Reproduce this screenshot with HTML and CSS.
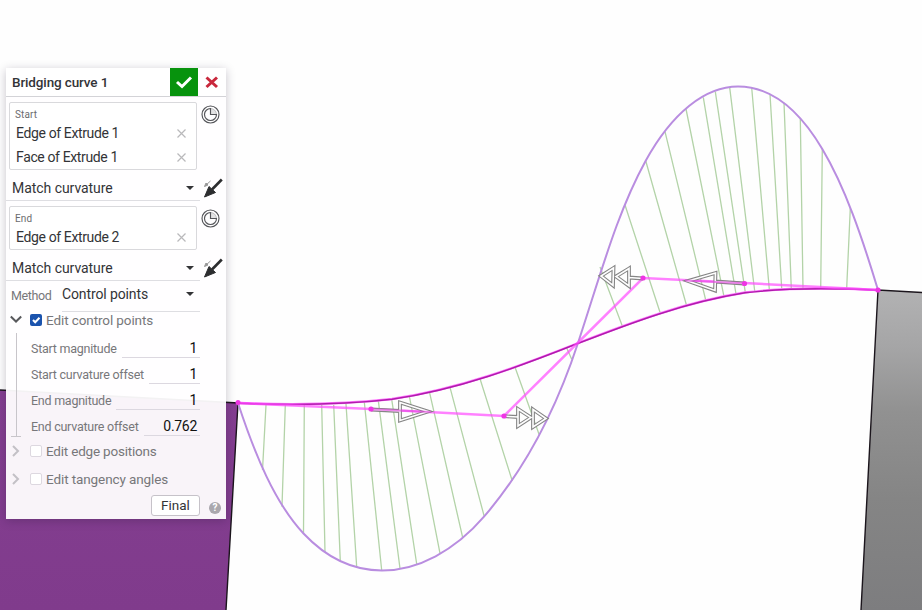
FILE: index.html
```
<!DOCTYPE html>
<html lang="en">
<head>
<meta charset="utf-8">
<title>Bridging curve</title>
<link rel="stylesheet" href="styles.css">
</head>
<body>
<svg class="scene" viewBox="0 0 922 610" width="922" height="610">
  <defs>
    <linearGradient id="side" x1="0" y1="290" x2="0" y2="610" gradientUnits="userSpaceOnUse">
      <stop offset="0" stop-color="#b2b2b3"/><stop offset=".18" stop-color="#a5a5a6"/><stop offset=".38" stop-color="#919191"/><stop offset=".65" stop-color="#858585"/><stop offset="1" stop-color="#7d7d7f"/>
    </linearGradient>
    <linearGradient id="block" x1="0" y1="390" x2="0" y2="610" gradientUnits="userSpaceOnUse">
      <stop offset="0" stop-color="#843f91"/><stop offset="1" stop-color="#803b8c"/>
    </linearGradient>
  </defs>
  <path d="M0 390L238 403L226 610H0Z" fill="url(#block)"/>
  <path d="M0 390L238 403L226 610" class="edge"/>
  <path d="M878 290L922 292.500V610H861Z" fill="url(#side)"/>
  <path d="M922 292.500L878 290L861 610" class="edge"/>
  <path class="comb" d="M266 405L262.500 470M285.300 405L282 506.700M304.300 405L303.500 533.500M321.700 405L325 552M333.700 405L340.300 561M346 404L356.700 567M364.300 402L381.700 570.300M378.300 400.700L400 568.500M391.700 399.300L416.700 564M409.300 396L440 553.300M429.300 391.300L462.700 537.700M450 387.300L484.300 516.700M480 378.700L512.300 481M515.300 368L539.300 435M566.700 348L571.700 359.300M622.300 326L600 267M625 205L660 312.300M645.700 160.700L686.700 306M665 131.700L705.700 300M686 109L724 296.700M703.300 97.300L736 294M715.300 91.700L745.300 292.300M729.700 87.700L754.700 291M751.700 87.700L769.300 289.300M770 94.300L781.700 288.500M784 102.700L791.300 288.500M800.300 118.300L803 288.500M822.300 149L820.700 288M850.300 208.300L846.700 288"/>
  <path class="envelope" d="M238 403C255 455 275 503 303.500 533.500C328 559.500 354 570.500 382 570.500C418 570.500 455 550.500 484 516.700C522 472.500 555 413 578 343C602 270 617 213 645.700 160.700C672 113 705 86.500 738 86.500C770 86.500 798 108 822.300 149C845 187 862 237 878 290"/>
  <path class="glow" d="M238 403C290 405 340 405 392 399C460 389 520 366 577 343.500C630 323 685 302 745 292.500C790 287 835 288 878 290"/>
  <path class="curve" d="M238 403.300C290 405.300 340 405.300 392 399.300C460 389.300 520 366.300 577 343.800C630 323.300 685 302.300 745 292.800C790 287.300 835 288.300 878 290.300"/>
  <path class="hull" d="M238 403L371 409L504 416L643 278L744 283L878 290"/>
  <g class="arrow-out">
    <path d="M371 409.500L400 411M400 402.500L428 411.500L400 420.500ZM504 416.200L518 417M518 409L531 417.500L518 426ZM533 409.500L546 418.500L533 427ZM744 283.500L715 281.500M715.500 273L688 281L715 290.500ZM643 278.500L629 277.500M629 268.500L616 276.500L629 286ZM613.500 268L601 276L613 285.500Z"/>
  </g>
  <g class="arrow-in">
    <path d="M371 409.500L400 411M400 402.500L428 411.500L400 420.500ZM504 416.200L518 417M518 409L531 417.500L518 426ZM533 409.500L546 418.500L533 427ZM744 283.500L715 281.500M715.500 273L688 281L715 290.500ZM643 278.500L629 277.500M629 268.500L616 276.500L629 286ZM613.500 268L601 276L613 285.500Z"/>
  </g>
  <path class="stem" d="M371 409.300L431 412M744 283.200L685 280.500"/>
  <g fill="#ee35e4"><circle cx="238" cy="402.500" r="2.500"/><circle cx="371" cy="409" r="2.600"/><circle cx="504" cy="416" r="2.600"/><circle cx="643" cy="278" r="2.600"/><circle cx="744.500" cy="283.500" r="2.600"/><circle cx="878" cy="290" r="2.600"/></g>
</svg>

<section class="panel">
  <header class="head">
    <span class="title">Bridging curve 1</span>
    <button class="accept"><svg width="28" height="28"><path d="M7 14L12 18.500L21 9.500" fill="none" stroke="#fff" stroke-width="3"/></svg></button>
    <button class="cancel"><svg width="28" height="28"><path d="M8.500 9.500L19 19M19 9.500L8.500 19" stroke="#c9283c" stroke-width="3"/></svg></button>
  </header>

  <div class="pick">
    <div class="box">
      <div class="caption">Start</div>
      <div class="item"><span>Edge of Extrude 1</span><svg class="x" width="9" height="9"><path d="M.5 .5l8 8m0-8l-8 8"/></svg></div>
      <div class="item"><span>Face of Extrude 1</span><svg class="x" width="9" height="9"><path d="M.5 .5l8 8m0-8l-8 8"/></svg></div>
    </div>
    <svg class="clock" width="19" height="19" viewBox="0 0 19 19"><circle cx="9.500" cy="9.500" r="8.500"/><path class="wedge" d="M9.500 3.500A6 6 0 0 1 15.500 9.500H9.500Z"/><path d="M9.500 3.500A6 6 0 1 0 15.500 9.500H9.500Z"/></svg>
  </div>
  <div class="match">
    <div class="select"><span>Match curvature</span><i class="caret"></i></div>
    <svg class="flip" width="20" height="20" viewBox="0 0 20 20"><path d="M18.800 1.500L9 11.500" stroke="#2c2d2f" stroke-width="2.600"/><path d="M1.500 19L6 8.500L12.500 14.500Z" fill="#2c2d2f" stroke="#2c2d2f"/><path d="M3 7L7.500 3M1.500 8.500l1.500-3.500 2 2Z" stroke="#999" stroke-width="1" fill="#999"/></svg>
  </div>

  <div class="pick single">
    <div class="box">
      <div class="caption">End</div>
      <div class="item"><span>Edge of Extrude 2</span><svg class="x" width="9" height="9"><path d="M.5 .5l8 8m0-8l-8 8"/></svg></div>
    </div>
    <svg class="clock" width="19" height="19" viewBox="0 0 19 19"><circle cx="9.500" cy="9.500" r="8.500"/><path class="wedge" d="M9.500 3.500A6 6 0 0 1 15.500 9.500H9.500Z"/><path d="M9.500 3.500A6 6 0 1 0 15.500 9.500H9.500Z"/></svg>
  </div>
  <div class="match">
    <div class="select"><span>Match curvature</span><i class="caret"></i></div>
    <svg class="flip" width="20" height="20" viewBox="0 0 20 20"><path d="M18.800 1.500L9 11.500" stroke="#2c2d2f" stroke-width="2.600"/><path d="M1.500 19L6 8.500L12.500 14.500Z" fill="#2c2d2f" stroke="#2c2d2f"/><path d="M3 7L7.500 3M1.500 8.500l1.500-3.500 2 2Z" stroke="#999" stroke-width="1" fill="#999"/></svg>
  </div>

  <div class="method">
    <span class="label">Method</span>
    <div class="select"><span>Control points</span><i class="caret"></i></div>
  </div>

  <div class="check open">
    <svg class="chev" width="12" height="12"><path d="M.8 2.500l5.200 5 5.200-5"/></svg>
    <span class="tick on"><svg width="12" height="12"><path d="M3 6l2.200 2.300L9.500 3.800" fill="none" stroke="#fff" stroke-width="2"/></svg></span>
    <span>Edit control points</span>
  </div>
  <div class="fields">
    <div class="field"><label>Start magnitude</label><span class="value">1</span></div>
    <div class="field"><label>Start curvature offset</label><span class="value">1</span></div>
    <div class="field"><label>End magnitude</label><span class="value">1</span></div>
    <div class="field"><label>End curvature offset</label><span class="value">0.762</span></div>
  </div>
  <div class="check edges">
    <svg class="chev" width="12" height="12"><path d="M3 1l5 5-5 5"/></svg>
    <span class="tick"></span>
    <span>Edit edge positions</span>
  </div>
  <div class="check">
    <svg class="chev" width="12" height="12"><path d="M3 1l5 5-5 5"/></svg>
    <span class="tick"></span>
    <span>Edit tangency angles</span>
  </div>
  <footer class="foot">
    <button class="final">Final</button>
    <span class="help">?</span>
  </footer>
</section>
</body>
</html>
```
FILE: styles.css
```
* { box-sizing: border-box; }
body {
  margin: 0;
  width: 922px;
  height: 610px;
  overflow: hidden;
  position: relative;
  background: #fefefe;
  font-family: Roboto, "Liberation Sans", sans-serif;
  font-size: 14px;
  color: #333437;
}
button { font: inherit; color: inherit; padding: 0; border: 0; background: none; }
svg { display: block; flex: none; }
span, label { white-space: nowrap; }

.scene { position: absolute; left: 0; top: 0; }
.edge { fill: none; stroke: #1b151c; stroke-width: 1.4; }
.comb { fill: none; stroke: #b3d3a8; stroke-width: 1.3; }
.envelope { fill: none; stroke: #b98de0; stroke-width: 2; }
.glow { fill: none; stroke: #ff77ff; stroke-width: 2.4; }
.curve { fill: none; stroke: #b01cac; stroke-width: 1.5; }
.hull { fill: none; stroke: #ff4cff; stroke-width: 2.6; opacity: .7; }
.arrow-out { fill: none; stroke: #858585; stroke-width: 3.8; }
.arrow-in { fill: none; stroke: #fefefe; stroke-width: 1.6; }
.stem { fill: none; stroke: #e548e2; stroke-width: 2; opacity: .65; }

.panel {
  position: absolute;
  left: 6px;
  top: 68px;
  width: 220px;
  height: 451px;
  display: flex;
  flex-direction: column;
  background: rgba(255, 254, 255, .95);
  box-shadow: 0 2px 9px rgba(30, 20, 50, .25);
}
.head {
  display: flex;
  height: 29px;
  flex: none;
  border-bottom: 1px solid #d3d3d7;
  background: #fff;
}
.title { flex: 1; padding-left: 6px; line-height: 29px; font-size: 13.5px; font-weight: 500; letter-spacing: -.13px; }
.accept { width: 28px; height: 28px; background: #07930d; }
.cancel { width: 28px; height: 28px; }

.pick { display: flex; gap: 4px; padding: 5px 0 0 3px; height: 73px; flex: none; }
.pick.single { height: 49px; }
.box { width: 188px; padding: 5px 10px 0 6px; border: 1px solid #d9d9dc; border-radius: 2px; background: #fff; }
.caption { height: 13px; line-height: 13px; font-size: 10px; color: #6b6b6e; margin-left: -1px; letter-spacing: .1px; }
.item { display: flex; justify-content: space-between; align-items: center; height: 24px; letter-spacing: -.37px; }
.x { fill: none; stroke: #b9b9bb; stroke-width: 1.2; }
.clock { margin-top: 3px; fill: none; stroke: #55565a; stroke-width: 1.15; }
.clock .wedge { fill: #e2e2e3; stroke: #b4b4b6; stroke-width: .8; }

.match { display: flex; height: 31px; flex: none; }
.match .select { width: 194px; height: 31px; padding: 5px 6px 0; letter-spacing: -.05px; }
.select { display: flex; justify-content: space-between; align-items: center; border-bottom: 1px solid #dedee2; }
.caret { border: 4px solid transparent; border-top: 4px solid #333437; border-bottom: 0; }
.flip { margin: 8px 0 0 3px; }

.method { display: flex; height: 31px; flex: none; padding-left: 5px; }
.method .label { flex: none; width: 51px; line-height: 30px; font-size: 12.5px; color: #77777a; letter-spacing: -.4px; }
.method .select { width: 138px; padding: 0 6px 4px 0; letter-spacing: -.12px; }

.check { display: flex; align-items: center; height: 28px; flex: none; padding-left: 4px; color: #77777a; font-size: 13.5px; letter-spacing: -.1px; }
.check.open { height: 16px; }
.check.edges { height: 28px; letter-spacing: -.2px; }
.check > span:last-child { margin-left: 4px; }
.chev { fill: none; stroke: #c3c0c6; stroke-width: 2; margin-right: 8px; }
.open .chev { stroke: #58595c; }
.tick { width: 12px; height: 12px; border: 1px solid #ddd8e0; border-radius: 2px; background: #fff; }
.tick.on { border: 0; background: #1b53ad; }

.fields { position: relative; margin: 5px 0 0 10px; padding: 2px 0 0 14px; width: 184px; height: 104px; border-left: 1px solid #c8c5ca; flex: none; }
.fields::after { content: ""; position: absolute; left: -6px; bottom: 0; width: 10px; height: 1px; background: #c8c5ca; }
.field { display: flex; height: 26px; align-items: center; gap: 5px; }
.field label { font-size: 12.5px; color: #77777a; letter-spacing: -.25px; }
.value { flex: 1; height: 20px; line-height: 20px; padding-right: 3px; text-align: right; border-bottom: 1px solid #dcd8e0; color: #111; letter-spacing: -.3px; }

.foot { display: flex; justify-content: flex-end; padding: 2px 5px 0 0; gap: 9px; }
.final { width: 49px; height: 21px; border: 1px solid #c6c2c9; border-radius: 3px; background: #fff; font-size: 13.5px; line-height: 19px; }
.help { width: 12px; height: 12px; margin-top: 7px; border-radius: 50%; background: #aaa7ad; color: #fff; font-size: 10px; font-weight: 700; line-height: 12px; text-align: center; }
```
